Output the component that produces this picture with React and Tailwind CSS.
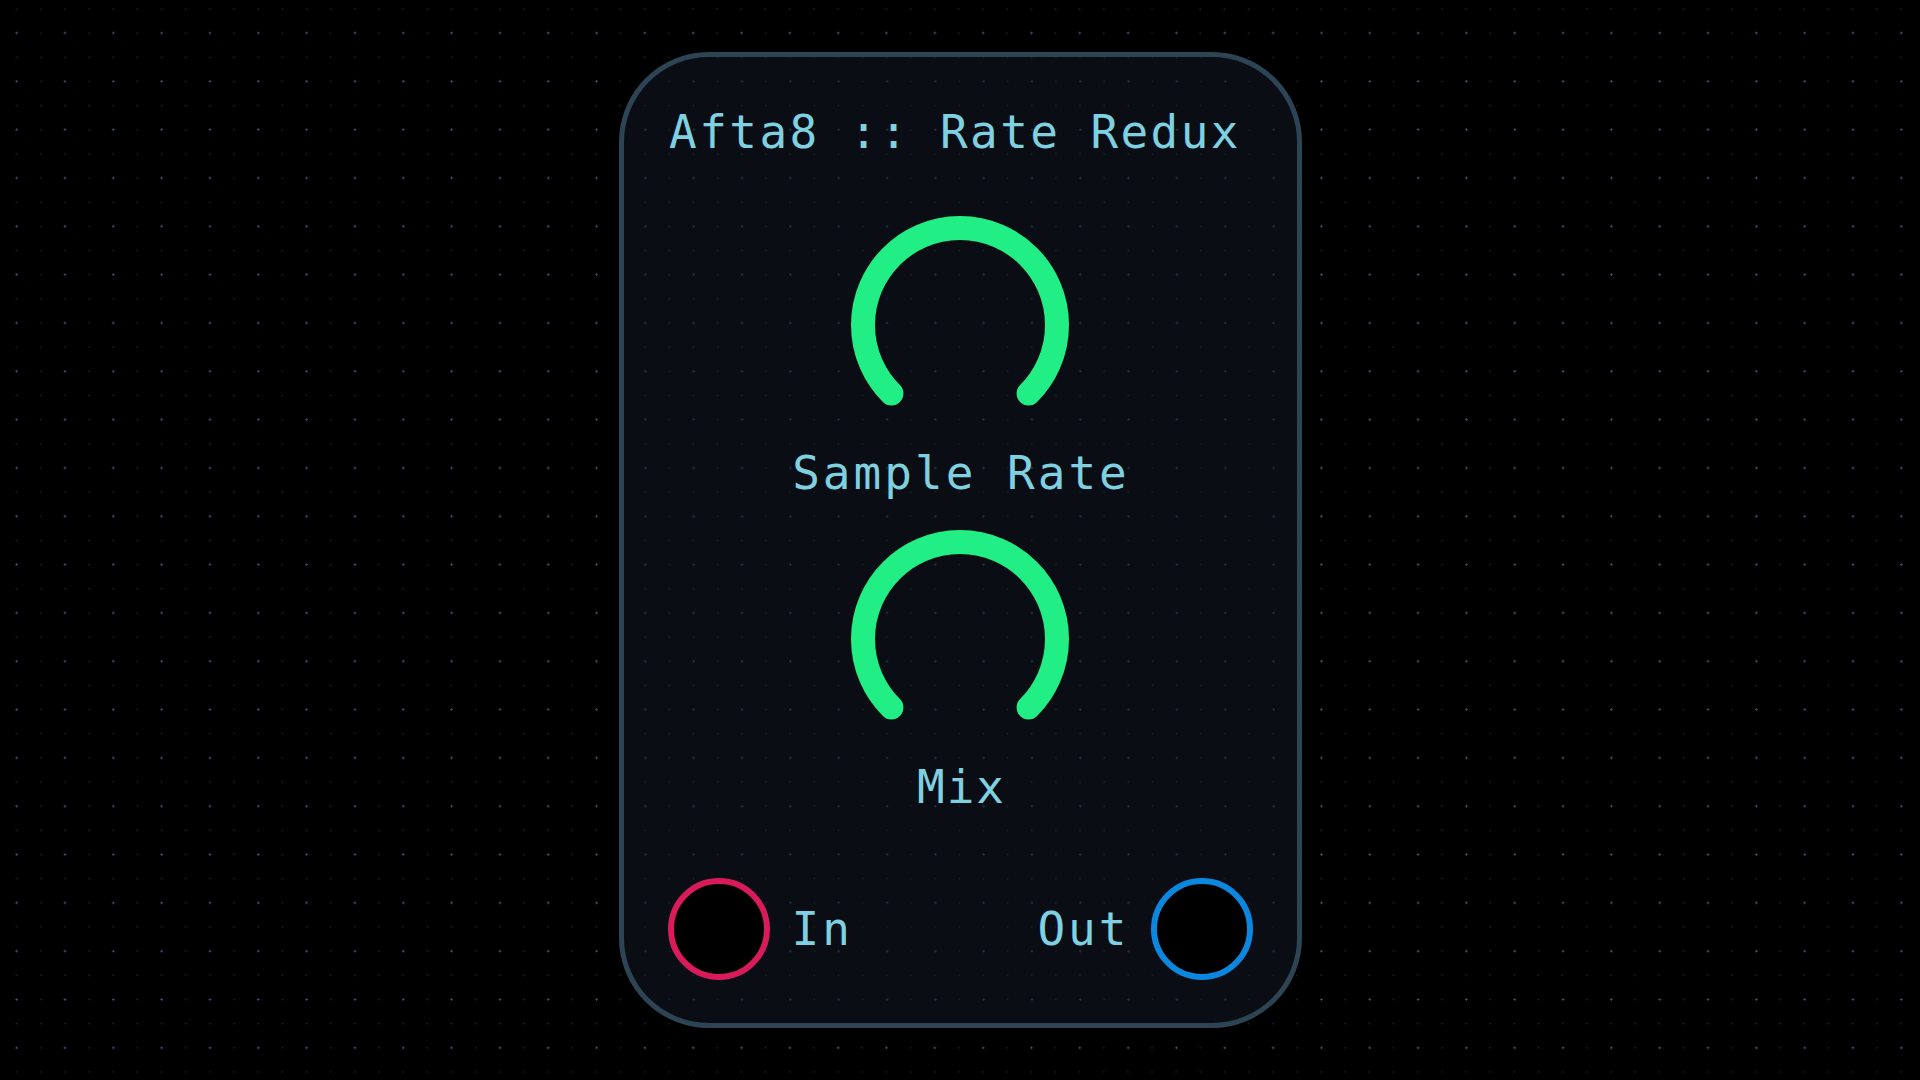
import React from "react";

const MONO = "font-['DejaVu_Sans_Mono','Liberation_Mono',monospace]";

// 270° arc knob, opening at the bottom
function Knob() {
  const c = 120;
  const r = 97;
  const d = r * Math.SQRT1_2;
  const path = `M ${c - d} ${c + d} A ${r} ${r} 0 1 1 ${c + d} ${c + d}`;
  return (
    <svg width="240" height="240" viewBox="0 0 240 240" className="block">
      <path d={path} fill="none" stroke="#21ef85" strokeWidth="24" strokeLinecap="round" />
    </svg>
  );
}

function Label({ children, className = "tracking-[3px]" }) {
  return (
    <div className={`${MONO} text-[46px] leading-[46px] text-[#7fd0e0] whitespace-nowrap ${className}`}>
      {children}
    </div>
  );
}

function Jack({ color }) {
  return <div className={`w-[102px] h-[102px] rounded-full border-[6px] bg-black ${color}`} />;
}

export default function App() {
  return (
    <div className="w-full h-screen flex items-center justify-center bg-black bg-[radial-gradient(circle,rgba(70,110,150,0.75)_0.8px,transparent_1.4px),radial-gradient(circle,rgba(40,60,80,0.55)_0.7px,transparent_1.2px)] bg-[length:48.34px_48.34px,24.17px_24.17px] bg-[position:-7.5px_8.8px,4.6px_21.1px] overflow-hidden">
      <div className="w-[683px] h-[976px] rounded-[90px] border-[5px] border-[#2c4454] bg-[#0a0e14] bg-[radial-gradient(circle,rgba(50,75,100,0.5)_0.8px,transparent_1.4px),radial-gradient(circle,rgba(40,60,80,0.4)_0.7px,transparent_1.2px)] bg-[length:48.34px_48.34px,24.17px_24.17px] bg-[position:-7.5px_8.8px,4.6px_21.1px] bg-fixed flex flex-col items-center pt-[52px]">
        <Label className="tracking-[2.4px] pr-[10px]">Afta8 :: Rate Redux</Label>

        <div className="mt-[50px]">
          <Knob />
        </div>
        <Label className="tracking-[3px] mt-[5px] pl-[2px]">Sample Rate</Label>

        <div className="mt-[23px]">
          <Knob />
        </div>
        <Label className="tracking-[2px] mt-[5px] pl-[3px]">Mix</Label>

        <div className="mt-[68px] w-full px-[44px] flex items-center justify-between">
          <div className="flex items-center gap-[22px]">
            <Jack color="border-[#d91a5b]" />
            <Label>In</Label>
          </div>
          <div className="flex items-center gap-[21px]">
            <Label>Out</Label>
            <Jack color="border-[#0b87e0]" />
          </div>
        </div>
      </div>
    </div>
  );
}
